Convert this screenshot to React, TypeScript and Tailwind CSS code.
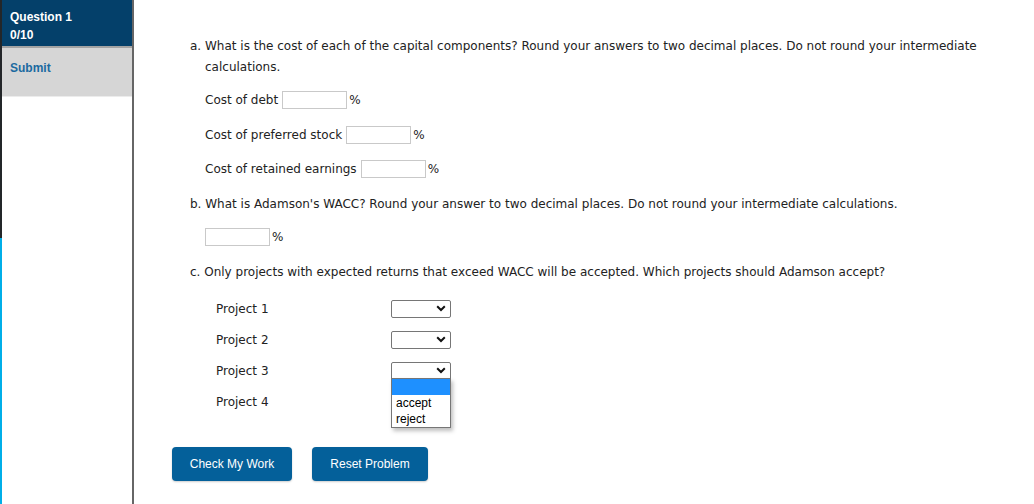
import { useState } from 'react';

const body = { fontFamily: '"DejaVu Sans", Verdana, sans-serif' };
const arial = { fontFamily: '"Liberation Sans", Arial, sans-serif' };

function Chevron() {
  return (
    <svg width="10" height="7" viewBox="0 0 10 7" className="shrink-0">
      <path d="M1.2 1.3 L5 5 L8.8 1.3" fill="none" stroke="#111" strokeWidth="2" />
    </svg>
  );
}

function FakeSelect({ open }: { open?: boolean }) {
  return (
    <div className="relative">
      <div className="w-[60px] h-[18px] border border-[#767676] rounded-[2px] bg-white flex items-center justify-end pr-[4px]">
        <Chevron />
      </div>
      {open && (
        <div
          className="absolute left-0 top-[16px] w-[60px] border border-[#767676] bg-white shadow-[2px_3px_4px_rgba(0,0,0,0.25)] z-10 text-[12px] leading-[16px] text-black"
          style={arial}
        >
          <div className="h-[16px] bg-[#1e90ff]" />
          <div className="h-[16px] pl-[4px]">accept</div>
          <div className="h-[16px] pl-[4px]">reject</div>
        </div>
      )}
    </div>
  );
}

function PctInput({ value, onChange }: { value: string; onChange: (v: string) => void }) {
  return (
    <span className="inline-flex items-center">
      <input
        value={value}
        onChange={e => onChange(e.target.value)}
        className="w-[65px] h-[18px] border border-[#c9c9c9] bg-white outline-none px-1 text-[12px]"
      />
      <span className="ml-[2px]">%</span>
    </span>
  );
}

export default function App() {
  const [debt, setDebt] = useState('');
  const [pref, setPref] = useState('');
  const [re, setRe] = useState('');
  const [wacc, setWacc] = useState('');

  return (
    <div className="flex h-[504px] w-[1034px] bg-white overflow-hidden">
      {/* window edge */}
      <div className="w-[2px] flex flex-col">
        <div className="h-[238px] bg-[#232629]" />
        <div className="flex-1 bg-[#00aee8]" />
      </div>

      {/* Sidebar */}
      <div className="w-[132px] border-r-2 border-[#666] flex flex-col" style={arial}>
        <div className="h-[46px] bg-[#04406a] text-white font-bold text-[12px] leading-[18px] pl-[8px] pt-[8px]">
          <div>Question 1</div>
          <div>0/10</div>
        </div>
        <div className="h-[2px] bg-[#a3a3a3]" />
        <div className="h-[48px] bg-[#d6d6d6] text-[#1b6aa0] font-bold text-[12px] pl-[8px] pt-[11px]">Submit</div>
        <div className="h-[1px] bg-[#ececec]" />
        <div className="flex-1 bg-white" />
      </div>

      {/* Content */}
      <div className="flex-1 pl-[38px] text-[12px] text-[#222]" style={body}>
        <div className="pt-[36px] pl-[18px] leading-[21px]">
          <div>a. What is the cost of each of the capital components? Round your answers to two decimal places. Do not round your intermediate</div>
          <div className="pl-[15px]">calculations.</div>
        </div>

        <div className="mt-[5px] pl-[33px]">
          <div className="h-[34px] flex items-center">
            <span className="mr-[4px]">Cost of debt</span>
            <PctInput value={debt} onChange={setDebt} />
          </div>
          <div className="h-[35px] flex items-center">
            <span className="mr-[4px]">Cost of preferred stock</span>
            <PctInput value={pref} onChange={setPref} />
          </div>
          <div className="h-[34px] flex items-center">
            <span className="mr-[4px]">Cost of retained earnings</span>
            <PctInput value={re} onChange={setRe} />
          </div>
        </div>

        <div className="mt-[8px] pl-[18px] leading-[21px]">
          b. What is Adamson's WACC? Round your answer to two decimal places. Do not round your intermediate calculations.
        </div>
        <div className="mt-[10px] pl-[33px] h-[24px] flex items-center">
          <PctInput value={wacc} onChange={setWacc} />
        </div>

        <div className="mt-[13px] pl-[18px] leading-[21px]">
          c. Only projects with expected returns that exceed WACC will be accepted. Which projects should Adamson accept?
        </div>

        <div className="mt-[10px] pl-[44px]">
          {[1, 2, 3, 4].map(n => (
            <div key={n} className="h-[31px] flex items-center">
              <span className="w-[175px]">Project {n}</span>
              {n < 4 && <FakeSelect open={n === 3} />}
            </div>
          ))}
        </div>

        <div className="mt-[30px] flex gap-[20px]" style={arial}>
          <button className="w-[120px] h-[34px] rounded-[4px] bg-[#04609a] text-white text-[12px] shadow-[0_1px_2px_rgba(0,0,0,0.2)]">
            Check My Work
          </button>
          <button className="w-[116px] h-[34px] rounded-[4px] bg-[#04609a] text-white text-[12px] shadow-[0_1px_2px_rgba(0,0,0,0.2)]">
            Reset Problem
          </button>
        </div>
      </div>
    </div>
  );
}
